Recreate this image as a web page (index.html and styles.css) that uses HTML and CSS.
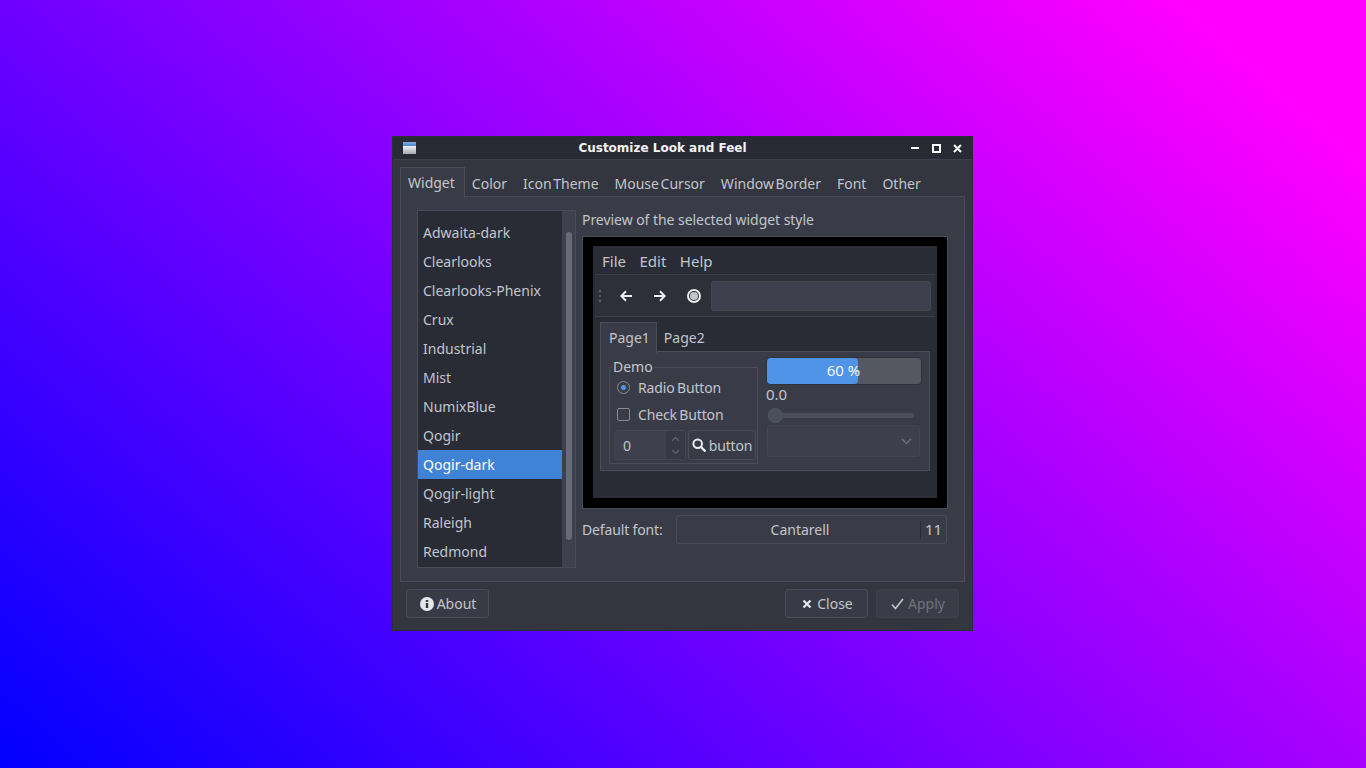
FILE: index.html
```html
<!DOCTYPE html>
<html lang="en">
<head>
    <meta charset="UTF-8">
    <title>Customize Look and Feel</title>
    <link rel="stylesheet" href="styles.css">
</head>
<body>

    <div class="window">
        <div class="titlebar">
            <svg class="app-icon" width="13" height="12" viewBox="0 0 13 12">
                <defs>
                    <linearGradient id="iconBody" x1="0" y1="0" x2="0" y2="1">
                        <stop offset="0" stop-color="#f2f3f5"/>
                        <stop offset="1" stop-color="#a4a8ae"/>
                    </linearGradient>
                    <linearGradient id="iconTop" x1="0" y1="0" x2="0" y2="1">
                        <stop offset="0" stop-color="#7fb0e4"/>
                        <stop offset="1" stop-color="#4a86cc"/>
                    </linearGradient>
                </defs>
                <rect y="4" width="13" height="8" fill="url(#iconBody)"/>
                <rect width="13" height="4" fill="url(#iconTop)"/>
            </svg>
            <div class="title">Customize Look and Feel</div>
            <div class="wm-buttons">
                <svg width="9" height="9" viewBox="0 0 9 9"><rect y="3" width="8" height="2" fill="#fff"/></svg>
                <svg width="9" height="9" viewBox="0 0 9 9"><path d="M1 1h7v7h-7z" fill="none" stroke="#fff" stroke-width="2"/></svg>
                <svg width="9" height="9" viewBox="0 0 9 9"><path d="M1 1l7 7M8 1l-7 7" stroke="#fff" stroke-width="2"/></svg>
            </div>
        </div>

        <div class="content">
            <div class="tabs">
                <div class="tab active">Widget</div>
                <div class="tab">Color</div>
                <div class="tab">Icon Theme</div>
                <div class="tab">Mouse Cursor</div>
                <div class="tab">Window Border</div>
                <div class="tab">Font</div>
                <div class="tab">Other</div>
            </div>

            <div class="panel">
                <div class="theme-box">
                    <div class="theme-list">
                        <div class="theme">Adwaita-dark</div>
                        <div class="theme">Clearlooks</div>
                        <div class="theme">Clearlooks-Phenix</div>
                        <div class="theme">Crux</div>
                        <div class="theme">Industrial</div>
                        <div class="theme">Mist</div>
                        <div class="theme">NumixBlue</div>
                        <div class="theme">Qogir</div>
                        <div class="theme selected">Qogir-dark</div>
                        <div class="theme">Qogir-light</div>
                        <div class="theme">Raleigh</div>
                        <div class="theme">Redmond</div>
                    </div>
                    <div class="scrollbar"><div class="thumb"></div></div>
                </div>

                <div class="right">
                    <div class="preview-label">Preview of the selected widget style</div>
                    <div class="preview">
                        <div class="demo">
                            <div class="menubar">
                                <span>File</span><span>Edit</span><span>Help</span>
                            </div>
                            <div class="toolbar">
                                <div class="grip"><i></i><i></i><i></i></div>
                                <svg class="tool back" width="12" height="12" viewBox="0 0 12 12"><path d="M12 6H1.500M6 1.200L1.300 6 6 10.800" fill="none" stroke="#eceef0" stroke-width="2"/></svg>
                                <svg class="tool forward" width="12" height="12" viewBox="0 0 12 12"><path d="M0 6h10.500M6 1.200L10.700 6 6 10.800" fill="none" stroke="#eceef0" stroke-width="2"/></svg>
                                <svg class="tool record" width="14" height="14" viewBox="0 0 14 14"><circle cx="7" cy="7" r="6" fill="#2e3039" stroke="#eceef0" stroke-width="2"/><circle cx="7" cy="7" r="4" fill="#c4c7cc"/></svg>
                                <div class="entry"></div>
                            </div>
                            <div class="demo-body">
                                <div class="page-tabs">
                                    <div class="page-tab active">Page1</div>
                                    <div class="page-tab">Page2</div>
                                </div>
                                <div class="page">
                                    <div class="group">
                                        <div class="legend">Demo</div>
                                        <div class="option">
                                            <span class="radio"><i></i></span>Radio Button
                                        </div>
                                        <div class="option">
                                            <span class="check"></span>Check Button
                                        </div>
                                        <div class="group-row">
                                            <div class="spin">
                                                <div class="spin-value">0</div>
                                                <div class="spin-arrows">
                                                    <svg width="9" height="6" viewBox="0 0 9 6"><path d="M1 5l3.500-3.500L8 5" fill="none" stroke="#5d616c" stroke-width="1.300"/></svg>
                                                    <svg width="9" height="6" viewBox="0 0 9 6"><path d="M1 1l3.500 3.500L8 1" fill="none" stroke="#5d616c" stroke-width="1.300"/></svg>
                                                </div>
                                            </div>
                                            <div class="demo-button">
                                                <svg width="14" height="14" viewBox="0 0 14 14"><circle cx="5.700" cy="5.700" r="4.300" fill="none" stroke="#eceef0" stroke-width="2"/><path d="M9 9l4.500 4.500" stroke="#eceef0" stroke-width="2.400"/></svg>
                                                button
                                            </div>
                                        </div>
                                    </div>
                                    <div class="controls">
                                        <div class="progress">
                                            <div class="progress-fill" style="width: 59%"></div>
                                            <div class="progress-text">60 %</div>
                                        </div>
                                        <div class="scale-value">0.0</div>
                                        <div class="scale"><div class="knob"></div></div>
                                        <div class="combo">
                                            <svg width="11" height="7" viewBox="0 0 11 7"><path d="M1 1l4.500 4.500L10 1" fill="none" stroke="#6a6e79" stroke-width="1.500"/></svg>
                                        </div>
                                    </div>
                                </div>
                            </div>
                        </div>
                    </div>
                    <div class="font-row">
                        <div class="font-label">Default font:</div>
                        <div class="font-button">
                            <div class="font-name">Cantarell</div>
                            <div class="font-size">11</div>
                        </div>
                    </div>
                </div>
            </div>

            <div class="actions">
                <div class="button about">
                    <svg width="14" height="14" viewBox="0 0 14 14"><circle cx="7" cy="7" r="7" fill="#e4e6e9"/><rect x="5.800" y="6" width="2.400" height="5" fill="#353843"/><rect x="5.800" y="3" width="2.400" height="2" fill="#353843"/></svg>
                    About
                </div>
                <div class="spacer"></div>
                <div class="button close">
                    <svg width="10" height="10" viewBox="0 0 10 10"><path d="M1.500 1.500l7 7M8.500 1.500l-7 7" stroke="#e4e6e9" stroke-width="2.200"/></svg>
                    Close
                </div>
                <div class="button disabled">
                    <svg width="13" height="12" viewBox="0 0 13 12"><path d="M1 6.500l3.500 4L12 1" fill="none" stroke="#c3c6cc" stroke-width="1.600"/></svg>
                    Apply
                </div>
            </div>
        </div>
    </div>

</body>
</html>
```
FILE: styles.css
```css
/* Desktop */
html, body {
    height: 100%;
}

body {
    margin: 0;
    display: flex;
    align-items: center;
    justify-content: center;
    overflow: hidden;
    background: linear-gradient(41deg, #0000ff 0%, #ff00ff 92%);
    font-family: "Noto Sans", sans-serif;
    font-size: 14px;
    color: #c2c5cc;
}

.window {
    width: 579px;
    height: 493px;
    margin: 0 1px 1px 0;
    border: 1px solid #2c2e37;
    background-color: #33353f;
    display: flex;
    flex-direction: column;
}

/* Title bar */
.titlebar {
    height: 22px;
    display: flex;
    align-items: center;
    padding: 0 10px;
    background-color: #292b34;
    border-bottom: 1px solid #3e414c;
}

.app-icon {
    flex: none;
}

.title {
    flex: 1;
    text-align: center;
    font-family: "DejaVu Sans", sans-serif;
    font-size: 12px;
    font-weight: bold;
    color: #f2f3f5;
    padding-right: 2px;
}

.wm-buttons {
    display: flex;
    gap: 12px;
}

/* Tabs */
.content {
    flex: 1;
    display: flex;
    flex-direction: column;
    padding: 7px 7px 12px;
}

.tabs {
    display: flex;
    height: 29px;
    word-spacing: -2px;
}

.tab {
    padding: 0 8px;
    margin-top: 2px;
    line-height: 29px;
}

.tab.active {
    margin-top: 0;
    line-height: 30px;
    height: 30px;
    background-color: #393c47;
    border: 1px solid #4a4d59;
    border-bottom: none;
    position: relative;
    z-index: 1;
    padding: 0 9px 0 7px;
}

.tab.active + .tab {
    padding-left: 7px;
}

.panel {
    height: 386px;
    box-sizing: border-box;
    display: flex;
    padding: 13px 16px;
    background-color: #393c47;
    border: 1px solid #4a4d59;
}

/* Theme list */
.theme-box {
    display: flex;
    height: 358px;
    border: 1px solid #4a4d59;
    box-sizing: border-box;
}

.theme-list {
    width: 144px;
    padding-top: 7px;
    background-color: #292b35;
    box-sizing: border-box;
}

.theme {
    height: 29px;
    line-height: 29px;
    padding-left: 5px;
}

.theme.selected {
    background-color: #3f83d6;
    color: #ffffff;
}

.scrollbar {
    width: 13px;
    padding: 21px 3px 27px;
    box-sizing: border-box;
    border-left: 1px solid #3e414c;
    background-color: #3e414d;
}

.thumb {
    height: 100%;
    border-radius: 3px;
    background-color: #686b75;
}

/* Preview */
.right {
    width: 366px;
    margin-left: 6px;
}

.preview-label {
    height: 26px;
    line-height: 20px;
    letter-spacing: -0.05px;
}

.preview {
    height: 273px;
    box-sizing: border-box;
    padding: 9px 10px;
    background-color: #000;
    border: 1px solid #4a4d59;
}

.demo {
    height: 252px;
    background-color: #292b35;
}

.menubar {
    height: 28px;
    box-sizing: border-box;
    padding: 2px 0 0 9px;
    display: flex;
    align-items: center;
    gap: 13.500px;
    font-size: 15px;
}

.toolbar {
    height: 43px;
    box-sizing: border-box;
    margin: 0 2px;
    display: flex;
    align-items: center;
    background-color: #2e3039;
    border-top: 1px solid #3a3d48;
    border-bottom: 1px solid #3e414c;
}

.grip {
    width: 2px;
    margin: 0 19px 0 4px;
    display: flex;
    flex-direction: column;
    gap: 3px;
}

.grip i {
    height: 2px;
    background-color: #5d606b;
}

.back {
    margin-right: 22px;
}

.forward {
    margin-right: 21px;
}

.record {
    margin-right: 10px;
}

.entry {
    width: 220px;
    height: 30px;
    box-sizing: border-box;
    border: 1px solid #454853;
    border-radius: 3px;
    background-color: #3e414d;
}

.demo-body {
    padding: 5px 7px 0;
}

.page-tabs {
    display: flex;
    height: 29px;
}

.page-tab {
    padding: 0 7px;
    line-height: 31px;
}

.page-tab.active {
    padding: 0 6px 0 8px;
    line-height: 29px;
    background-color: #393c47;
    border: 1px solid #4a4d59;
    border-bottom: none;
    position: relative;
    z-index: 1;
    height: 30px;
}

.page {
    width: 330px;
    height: 120px;
    box-sizing: border-box;
    display: flex;
    padding: 6px 8px;
    background-color: #393c47;
    border: 1px solid #4a4d59;
}

.group {
    width: 149px;
    height: 97px;
    margin-top: 9px;
    box-sizing: border-box;
    position: relative;
    border: 1px solid #4a4d59;
    padding: 6px 0 0 4px;
}

.legend {
    position: absolute;
    left: 2px;
    top: -11px;
    padding: 0 1px;
    line-height: 20px;
    background-color: #393c47;
}

.option {
    height: 27px;
    display: flex;
    align-items: center;
    gap: 8px;
    padding-left: 3px;
    word-spacing: -1px;
    letter-spacing: -0.15px;
}

.radio {
    width: 13px;
    height: 13px;
    box-sizing: border-box;
    border: 1px solid #888b94;
    border-radius: 50%;
    display: flex;
    align-items: center;
    justify-content: center;
}

.radio i {
    width: 5px;
    height: 5px;
    border-radius: 50%;
    background-color: #4f94e6;
}

.check {
    width: 13px;
    height: 13px;
    box-sizing: border-box;
    border: 1px solid #888b94;
    border-radius: 2px;
}

.group-row {
    display: flex;
    gap: 2px;
    margin-top: 2px;
}

.spin {
    width: 72px;
    height: 30px;
    display: flex;
    box-sizing: border-box;
    border: 1px solid #44474f;
    border-radius: 3px;
    background-color: #363944;
}

.spin-value {
    width: 51px;
    padding-left: 8px;
    line-height: 29px;
    box-sizing: border-box;
    background-color: #3e414d;
}

.spin-arrows {
    flex: 1;
    display: flex;
    flex-direction: column;
    align-items: center;
    justify-content: center;
    gap: 7px;
}

.demo-button {
    width: 68px;
    height: 30px;
    box-sizing: border-box;
    display: flex;
    align-items: center;
    justify-content: center;
    gap: 3px;
    border: 1px solid #4a4d59;
    border-radius: 3px;
    background-color: #383b45;
    letter-spacing: -0.2px;
}

.controls {
    width: 154px;
    margin-left: 9px;
}

.progress {
    height: 28px;
    margin: -1px -1px -1px -1px;
    box-sizing: border-box;
    border: 1px solid #2f3139;
    border-radius: 4px;
    position: relative;
    overflow: hidden;
    background-color: #555861;
}

.progress-fill {
    height: 100%;
    background-color: #4f94e6;
    border-radius: 4px;
}

.progress-text {
    position: absolute;
    top: 0;
    left: -1px;
    right: 0;
    text-align: center;
    line-height: 24px;
    font-size: 15px;
    color: #f5f6f8;
}

.scale-value {
    height: 20px;
    line-height: 18px;
    margin: 1px 0 0 -1px;
    font-size: 15px;
}

.scale {
    height: 5px;
    width: 146px;
    margin: 8px 0 0 1px;
    border-radius: 3px;
    background-color: #4b4e59;
    position: relative;
}

.knob {
    position: absolute;
    left: 0;
    top: -5px;
    width: 15px;
    height: 15px;
    box-sizing: border-box;
    border: 1px solid #555863;
    border-radius: 50%;
    background-color: #4b4f5c;
}

.combo {
    height: 32px;
    width: 153px;
    margin-top: 7px;
    box-sizing: border-box;
    display: flex;
    align-items: center;
    justify-content: flex-end;
    padding-right: 7px;
    border: 1px solid #434651;
    border-radius: 3px;
    background-color: #3d404b;
}

/* Default font */
.font-row {
    display: flex;
    align-items: center;
    margin-top: 6px;
    width: 365px;
}

.font-label {
    width: 94px;
    letter-spacing: -0.15px;
}

.font-button {
    width: 271px;
    height: 29px;
    box-sizing: border-box;
    display: flex;
    align-items: center;
    border: 1px solid #4a4d59;
    border-radius: 3px;
    background-color: #393c47;
}

.font-name {
    flex: 1;
    text-align: center;
    padding-left: 3px;
}

.font-size {
    width: 25px;
    height: 18px;
    line-height: 16px;
    text-align: center;
    font-size: 15px;
    border-left: 1px solid #292b35;
}

/* Bottom buttons */
.actions {
    display: flex;
    gap: 8px;
    padding: 7px 6px 0;
}

.spacer {
    flex: 1;
}

.button {
    width: 83px;
    height: 29px;
    box-sizing: border-box;
    display: flex;
    align-items: center;
    justify-content: center;
    gap: 4px;
    border: 1px solid #4a4d59;
    border-radius: 3px;
    background-color: #383b45;
}

.button.about {
    gap: 3px;
    padding-left: 1px;
}

.button.close {
    gap: 5px;
    padding-left: 2px;
}

.button.disabled {
    color: #70737d;
    border-color: #3e414c;
    background-color: #3a3d47;
    padding-left: 1px;
}
```
